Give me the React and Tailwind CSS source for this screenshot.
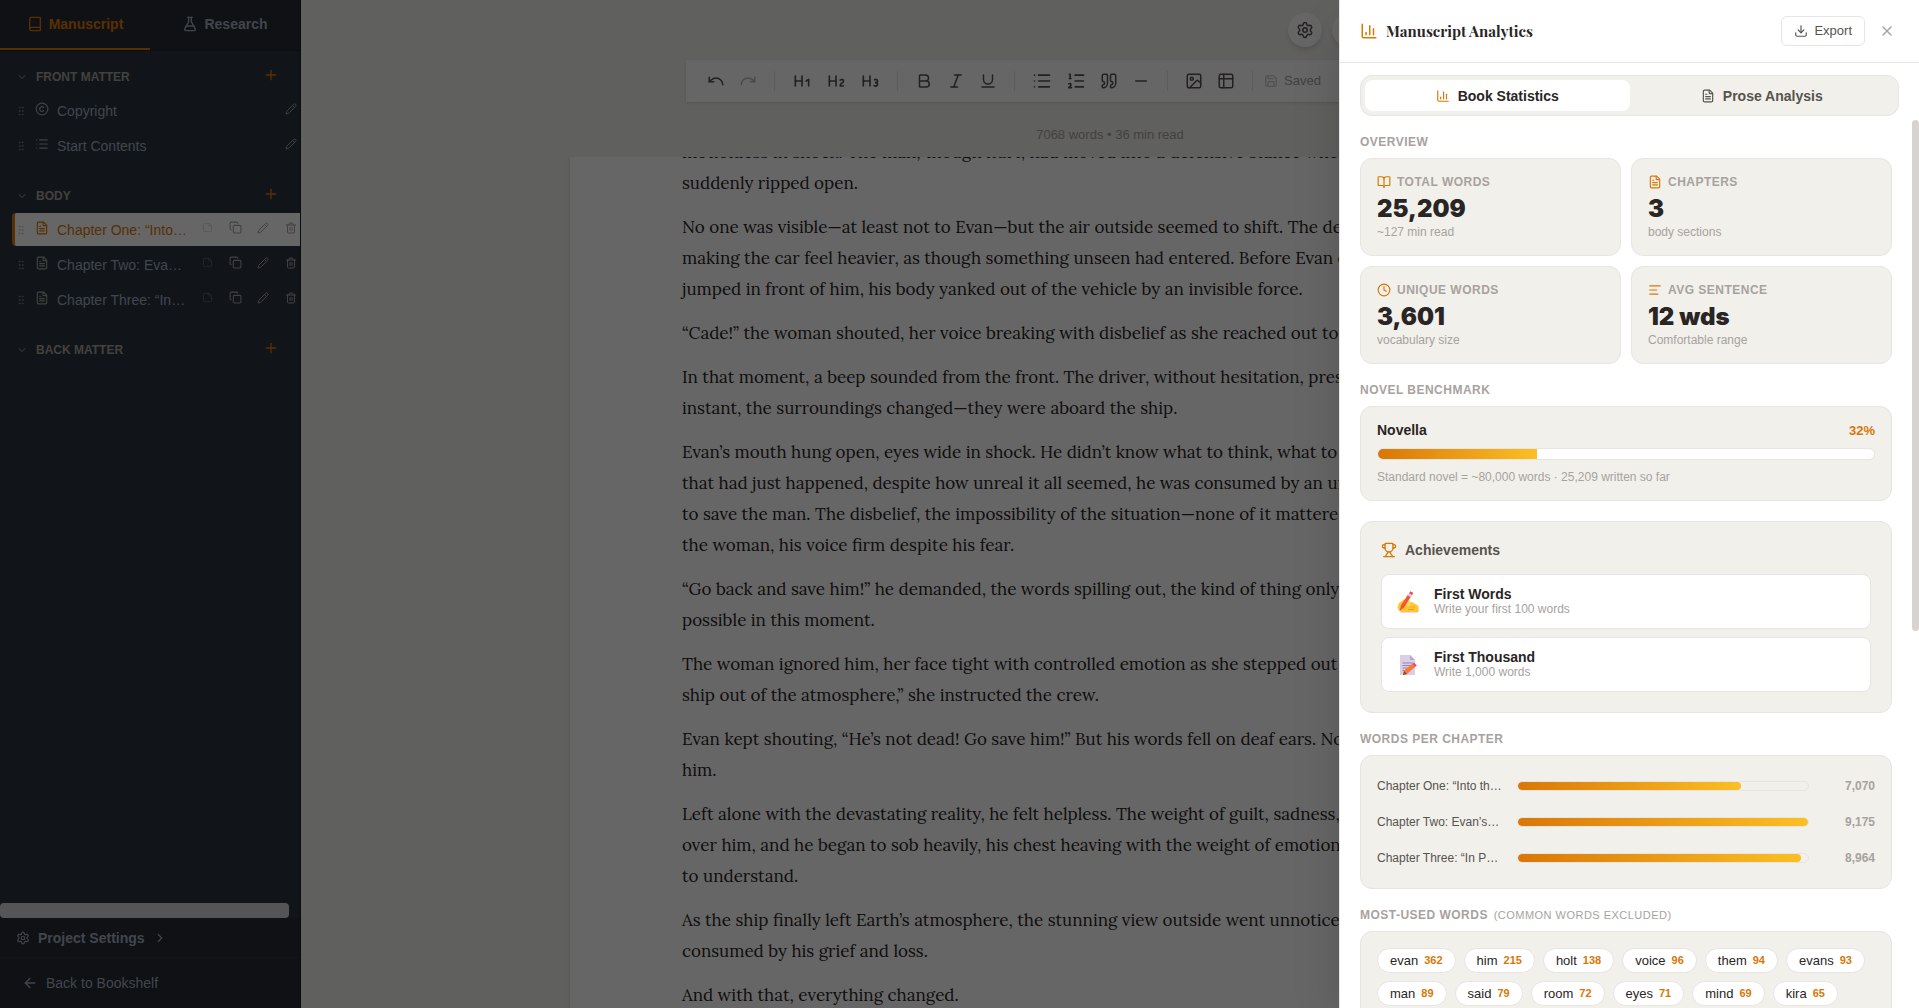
import { useState } from 'react';
import {
  AlignLeft, ArrowLeft, Bold, Book, BookOpen, ChartColumn, ChevronDown, ChevronRight, Clock,
  Copy, Copyright, Download, FileText, FlaskConical, GripVertical, Heading1, Heading2, Heading3,
  Image, Italic, List, ListOrdered, Minus, Moon, Pencil, Plus, Quote, Redo, Save, Settings,
  StickyNote, Trash2, Trophy, Underline, Undo, X,
} from 'lucide-react';

function TableIcon({ size }) {
  return (
    <svg
      width={size}
      height={size}
      viewBox="0 0 24 24"
      fill="none"
      stroke="currentColor"
      strokeWidth="2"
      strokeLinecap="round"
      strokeLinejoin="round"
      aria-hidden="true"
    >
      <rect x="3" y="3" width="18" height="18" rx="2" />
      <path d="M3 9h18M9 3v18" />
    </svg>
  );
}

const sections = [
  {
    title: 'Front Matter',
    items: [
      { name: 'Copyright', icon: Copyright },
      { name: 'Start Contents', icon: List },
    ],
  },
  {
    title: 'Body',
    items: [
      { name: 'Chapter One: “Into…', icon: FileText, chapter: true, active: true },
      { name: 'Chapter Two: Eva…', icon: FileText, chapter: true },
      { name: 'Chapter Three: “In…', icon: FileText, chapter: true },
    ],
  },
  { title: 'Back Matter', items: [] },
];

const toolGroups = [
  [
    { label: 'Undo', icon: Undo, size: 18 },
    { label: 'Redo', icon: Redo, size: 18, disabled: true },
  ],
  [
    { label: 'Heading 1', icon: Heading1, size: 20 },
    { label: 'Heading 2', icon: Heading2, size: 20 },
    { label: 'Heading 3', icon: Heading3, size: 20 },
  ],
  [
    { label: 'Bold', icon: Bold, size: 18 },
    { label: 'Italic', icon: Italic, size: 18 },
    { label: 'Underline', icon: Underline, size: 18 },
  ],
  [
    { label: 'Bullet list', icon: List, size: 20 },
    { label: 'Numbered list', icon: ListOrdered, size: 20 },
    { label: 'Quote', icon: Quote, size: 18 },
    { label: 'Divider', icon: Minus, size: 18 },
  ],
  [
    { label: 'Image', icon: Image, size: 18 },
    { label: 'Table', icon: TableIcon, size: 18 },
  ],
];

const paragraphs = [
  ['motionless in shock. The man, though hurt, had moved into a defensive stance when', 'suddenly ripped open.'],
  [
    'No one was visible—at least not to Evan—but the air outside seemed to shift. The de',
    'making the car feel heavier, as though something unseen had entered. Before Evan c',
    'jumped in front of him, his body yanked out of the vehicle by an invisible force.',
  ],
  ['“Cade!” the woman shouted, her voice breaking with disbelief as she reached out to'],
  [
    'In that moment, a beep sounded from the front. The driver, without hesitation, pres',
    'instant, the surroundings changed—they were aboard the ship.',
  ],
  [
    'Evan’s mouth hung open, eyes wide in shock. He didn’t know what to think, what to',
    'that had just happened, despite how unreal it all seemed, he was consumed by an ur',
    'to save the man. The disbelief, the impossibility of the situation—none of it mattered',
    'the woman, his voice firm despite his fear.',
  ],
  [
    '“Go back and save him!” he demanded, the words spilling out, the kind of thing only',
    'possible in this moment.',
  ],
  [
    'The woman ignored him, her face tight with controlled emotion as she stepped out',
    'ship out of the atmosphere,” she instructed the crew.',
  ],
  ['Evan kept shouting, “He’s not dead! Go save him!” But his words fell on deaf ears. No', 'him.'],
  [
    'Left alone with the devastating reality, he felt helpless. The weight of guilt, sadness,',
    'over him, and he began to sob heavily, his chest heaving with the weight of emotion',
    'to understand.',
  ],
  [
    'As the ship finally left Earth’s atmosphere, the stunning view outside went unnotice',
    'consumed by his grief and loss.',
  ],
  ['And with that, everything changed.'],
];

const overview = [
  { label: 'Total Words', value: '25,209', note: '~127 min read', icon: BookOpen },
  { label: 'Chapters', value: '3', note: 'body sections', icon: FileText },
  { label: 'Unique Words', value: '3,601', note: 'vocabulary size', icon: Clock },
  { label: 'Avg Sentence', value: '12 wds', note: 'Comfortable range', icon: AlignLeft },
];

const chapters = [
  { name: 'Chapter One: “Into th…', words: 7070 },
  { name: 'Chapter Two: Evan’s…', words: 9175 },
  { name: 'Chapter Three: “In P…', words: 8964 },
];

const topWords = [
  ['evan', 362], ['him', 215], ['holt', 138], ['voice', 96], ['them', 94], ['evans', 93],
  ['man', 89], ['said', 79], ['room', 72], ['eyes', 71], ['mind', 69], ['kira', 65],
];

function WritingHand() {
  return (
    <svg width="24" height="24" viewBox="0 0 24 24" aria-hidden="true">
      <path d="M4 22.500 6 18l9 .5 6 .5 1 3.500z" fill="#f7a8c4" />
      <path d="M1.500 17 3 13l5-3.500 2.500-.5 1.500 3 4 0 6.500 4 .3 5.500-5 .5H6.500L2.500 20z" fill="#ffc62e" />
      <path d="m9 13.500 4-3 2.500 2-3 3.500 6 .5-4 2.500z" fill="#ffdc5e" />
      <path d="M13 17h6M12 19.500h6" stroke="#f09a1c" strokeWidth="1" />
      <path d="m3.500 21 1.500-5.500L12 4.500l3.200 1.700L8 17.500z" fill="#f4552f" />
      <path d="m13 3.500 1.300-2.300 2.900 1.500-1.200 2.500z" fill="#f4446b" />
      <path d="m11.800 5.500 3.200 1.700 1-2-3-1.700z" fill="#d9c8e6" />
    </svg>
  );
}

function Memo() {
  return (
    <svg width="24" height="24" viewBox="0 0 24 24" aria-hidden="true">
      <path d="M4 2h10l5 5v15H4z" fill="#d9d0e6" />
      <path d="M14 2v5h5z" fill="#b6a8cc" />
      <path d="M6.500 10h10M6.500 12.500h10M6.500 15h7M6.500 17.500h4" stroke="#9485ad" strokeWidth="1" />
      <path d="m7 22 1-4.500 8-6.500 2.800 3.200L11 21z" fill="#f97b33" />
      <path d="m7 22 1-4 3 3z" fill="#8c4b3a" />
      <path d="m16 11 2-1.500 2.800 3-2 1.700z" fill="#f4446b" />
    </svg>
  );
}

function SidebarItem({ item }) {
  const Icon = item.icon;
  return (
    <li
      className={
        item.active
          ? 'flex h-[33px] items-center rounded-l border-l-3 border-[#d97706] bg-white text-[#d97706]'
          : 'flex h-[33px] items-center rounded-l border-l-3 border-transparent text-[#a0aec0]'
      }
    >
      <GripVertical size={12} className="shrink-0 text-[#a8a29e] opacity-60" />
      <a href="#section" className="flex min-w-0 flex-1 items-center gap-2 pl-2">
        <Icon size={14} className={item.active ? 'mb-1 shrink-0' : 'mb-1 shrink-0 text-[#a8a29e]'} />
        <span className="truncate text-sm">{item.name}</span>
      </a>
      <div className="-mr-[5px] mb-1 flex shrink-0 items-center text-[#a8a29e]">
        {item.chapter && (
          <>
            <button type="button" aria-label="Notes" className="flex w-7 justify-center opacity-40">
              <StickyNote size={11} />
            </button>
            <button type="button" aria-label="Duplicate" className="flex w-7 justify-center">
              <Copy size={13} />
            </button>
          </>
        )}
        <button type="button" aria-label="Rename" className="flex w-7 justify-center">
          <Pencil size={12} />
        </button>
        {item.chapter && (
          <button type="button" aria-label="Delete" className="flex w-7 justify-center">
            <Trash2 size={12} />
          </button>
        )}
      </div>
    </li>
  );
}

function Sidebar() {
  return (
    <aside className="flex w-[301px] shrink-0 flex-col border-r border-[#1a202c] bg-[#2b3440]">
      <div className="flex h-[51px] shrink-0 border-b border-[#1f242d] bg-[#282b32]">
        <button
          type="button"
          className="flex flex-1 items-center justify-center gap-1.5 border-b-2 border-[#d97706] text-sm font-bold text-[#d97706]"
        >
          <Book size={16} />
          Manuscript
        </button>
        <button
          type="button"
          className="flex flex-1 items-center justify-center gap-1.5 border-b-2 border-transparent text-sm font-bold text-[#a0aec0]"
        >
          <FlaskConical size={16} />
          Research
        </button>
      </div>

      <nav className="flex min-h-0 flex-1 flex-col gap-5 overflow-hidden pt-3 pl-3">
        {sections.map((section) => (
          <section key={section.title}>
            <div className="mb-[3px] flex h-7 items-center justify-between pr-[21px] pl-1">
              <h2 className="flex items-center gap-2 text-xs font-bold text-[#a8a29e] uppercase">
                <ChevronDown size={12} />
                {section.title}
              </h2>
              <button type="button" aria-label={`Add to ${section.title}`} className="mb-1 text-[#d97706]">
                <Plus size={16} />
              </button>
            </div>
            <ul className="flex flex-col gap-0.5">
              {section.items.map((item) => (
                <SidebarItem key={item.name} item={item} />
              ))}
            </ul>
          </section>
        ))}
      </nav>

      {/* horizontal scroll thumb of the section tree */}
      <div className="mr-[11px] h-[15px] shrink-0 rounded bg-[#d6d3d1]" />

      <div className="shrink-0 bg-[#282b32] text-[#a0aec0]">
        <button
          type="button"
          className="flex h-10 w-full items-center gap-2 border-b border-[#2b3440] pl-4 text-sm font-bold"
        >
          <Settings size={14} />
          Project Settings
          <ChevronRight size={14} />
        </button>
        <a href="#bookshelf" className="flex h-[50px] items-center gap-2 pl-[22px] text-sm">
          <ArrowLeft size={16} />
          Back to Bookshelf
        </a>
      </div>
    </aside>
  );
}

function Toolbar() {
  return (
    <div className="flex h-[42px] items-center bg-white px-[15px] text-[#57534e] shadow-sm">
      {toolGroups.map((group, i) => (
        <div key={i} className="flex items-center">
          <div className="flex items-center gap-0.5">
            {group.map(({ label, icon: Icon, size, disabled }) => (
              <button
                key={label}
                type="button"
                aria-label={label}
                disabled={disabled}
                className="p-1.5 disabled:opacity-40"
              >
                <Icon size={size} />
              </button>
            ))}
          </div>
          <span className="mx-[11px] h-5 w-px bg-[#e7e5e4]" />
        </div>
      ))}
      <span className="flex items-center gap-1.5 text-[13px] text-[#a8a29e]">
        <Save size={14} className="opacity-60" />
        Saved
      </span>
    </div>
  );
}

function Editor() {
  return (
    <main className="flex min-w-0 flex-1 flex-col items-center bg-[#f1f0eb]">
      <div className="w-full max-w-[848px] shrink-0">
        <div className="flex h-[60px] items-center justify-end gap-2.5 pr-9">
          {[Settings, ChartColumn, BookOpen, Download, Moon].map((Icon, i) => (
            <button
              key={i}
              type="button"
              aria-label="Editor option"
              className="flex size-[34px] items-center justify-center rounded-full bg-white text-[#57534e] shadow-md"
            >
              <Icon size={18} />
            </button>
          ))}
        </div>
        <Toolbar />
        <p className="pt-[25px] pb-[15px] text-center text-[13px] leading-[15px] text-[#a8a29e]">
          7068 words • 36 min read
        </p>
      </div>
      <div className="min-h-0 w-full flex-1 overflow-hidden">
        <article className="mx-auto -mt-5 flex w-full max-w-[1080px] flex-col gap-[13px] bg-white px-28 font-[Lora,'Liberation_Serif',serif] text-[17px] leading-[31px] text-[#292524] shadow-md">
          {paragraphs.map((lines) => (
            <p key={lines[0]}>
              {lines.map((line) => (
                <span key={line} className="block whitespace-nowrap">{line}</span>
              ))}
            </p>
          ))}
        </article>
      </div>
    </main>
  );
}

function SectionTitle({ children }) {
  return (
    <h3 className="mt-[18px] mb-2 text-xs leading-4 font-bold tracking-[0.04em] text-[#a8a29e] uppercase">
      {children}
    </h3>
  );
}

function StatCard({ stat }) {
  const Icon = stat.icon;
  return (
    <div className="rounded-xl border border-[#e7e5e4] bg-[#f1f0eb] p-4">
      <div className="flex items-center gap-1.5 text-xs leading-[14px] font-bold tracking-[0.04em] text-[#a8a29e] uppercase">
        <Icon size={14} className="text-[#d97706]" />
        {stat.label}
      </div>
      <div className="mt-1.5 mb-0.5 font-[Inter,sans-serif] text-2xl leading-7 font-black text-[#292524]">{stat.value}</div>
      <div className="text-xs leading-[14px] text-[#a8a29e]">{stat.note}</div>
    </div>
  );
}

function Achievement({ art, title, note }) {
  return (
    <li className="flex items-center gap-3.5 rounded-lg border border-[#e7e5e4] bg-white px-3.5 py-3">
      {art}
      <div>
        <div className="text-sm leading-[15px] font-bold text-[#292524]">{title}</div>
        <div className="text-xs leading-[14px] text-[#a8a29e]">{note}</div>
      </div>
    </li>
  );
}

function AnalyticsDrawer() {
  const [tab, setTab] = useState('stats');
  const longest = Math.max(...chapters.map((c) => c.words));
  const tabClass = 'flex h-[31px] flex-1 items-center justify-center gap-2 rounded-lg text-sm font-bold';

  return (
    <div
      role="dialog"
      aria-label="Manuscript Analytics"
      className="absolute inset-y-0 right-0 flex w-[580px] flex-col border-l border-[#e7e5e4] bg-white shadow-2xl"
    >
      <header className="flex h-[63px] shrink-0 items-center border-b border-[#e7e5e4] px-5">
        <ChartColumn size={18} className="text-[#d97706]" />
        <h2 className="ml-2 flex-1 font-['Playfair_Display','Liberation_Serif',serif] text-[15px] font-bold text-[#292524]">
          Manuscript Analytics
        </h2>
        <button
          type="button"
          className="flex h-[30px] items-center gap-1.5 rounded-md border border-[#e7e5e4] px-3 text-[13px] text-[#57534e]"
        >
          <Download size={14} />
          Export
        </button>
        <button type="button" aria-label="Close" className="ml-2.5 p-1 text-[#a8a29e]">
          <X size={16} />
        </button>
      </header>

      <div className="shrink-0 px-5 pt-3">
        <div className="flex rounded-xl border border-[#e7e5e4] bg-[#f1f0eb] p-1">
          <button
            type="button"
            onClick={() => setTab('stats')}
            className={tab === 'stats' ? `${tabClass} bg-white text-[#292524]` : `${tabClass} text-[#57534e]`}
          >
            <ChartColumn size={14} className="text-[#d97706]" />
            Book Statistics
          </button>
          <button
            type="button"
            onClick={() => setTab('prose')}
            className={tab === 'prose' ? `${tabClass} bg-white text-[#292524]` : `${tabClass} text-[#57534e]`}
          >
            <FileText size={14} />
            Prose Analysis
          </button>
        </div>
      </div>

      <div className="mt-1 flex min-h-0 flex-1 overflow-hidden">
        <div className="min-w-0 flex-1 px-5">
          <div className="-mt-1">
            <SectionTitle>Overview</SectionTitle>
          </div>
          <div className="grid grid-cols-2 gap-2.5">
            {overview.map((stat) => (
              <StatCard key={stat.label} stat={stat} />
            ))}
          </div>

          <SectionTitle>Novel Benchmark</SectionTitle>
          <div className="rounded-xl border border-[#e7e5e4] bg-[#f1f0eb] p-4">
            <div className="flex items-center justify-between font-bold">
              <span className="text-sm leading-[15px] text-[#292524]">Novella</span>
              <span className="text-[13px] leading-[15px] text-[#d97706]">32%</span>
            </div>
            <div className="my-2.5 h-3 overflow-hidden rounded-md border border-[#e7e5e4] bg-white">
              <div className="h-full bg-linear-to-r from-[#d97706] to-[#fbbf24]" style={{ width: '32%' }} />
            </div>
            <p className="text-xs leading-[14px] text-[#a8a29e]">
              Standard novel = ~80,000 words · 25,209 written so far
            </p>
          </div>

          <div className="mt-5 rounded-xl border border-[#e7e5e4] bg-[#f1f0eb] p-5">
            <h3 className="mb-4 flex items-center gap-2 text-sm leading-4 font-bold text-[#57534e]">
              <Trophy size={16} className="text-[#d97706]" />
              Achievements
            </h3>
            <ul className="flex flex-col gap-2">
              <Achievement art={<WritingHand />} title="First Words" note="Write your first 100 words" />
              <Achievement art={<Memo />} title="First Thousand" note="Write 1,000 words" />
            </ul>
          </div>

          <SectionTitle>Words Per Chapter</SectionTitle>
          <ul className="rounded-xl border border-[#e7e5e4] bg-[#f1f0eb] px-4 py-3">
            {chapters.map((c) => (
              <li key={c.name} className="flex h-9 items-center gap-2.5 text-xs">
                <span className="w-[130px] truncate text-[#57534e]">{c.name}</span>
                <div className="h-2.5 flex-1 overflow-hidden rounded-full border border-[#e7e5e4]">
                  <div
                    className="h-full rounded-full bg-linear-to-r from-[#d97706] to-[#fbbf24]"
                    style={{ width: `${(c.words / longest) * 100}%` }}
                  />
                </div>
                <span className="w-14 text-right font-bold text-[#a8a29e]">{c.words.toLocaleString('en-US')}</span>
              </li>
            ))}
          </ul>

          <SectionTitle>
            Most-Used Words <span className="ml-0.5 text-[11px] font-normal">(common words excluded)</span>
          </SectionTitle>
          <ul className="flex flex-wrap gap-2 rounded-xl border border-[#e7e5e4] bg-[#f1f0eb] p-4">
            {topWords.map(([word, count]) => (
              <li
                key={word}
                className="flex h-[25px] items-center gap-1.5 rounded-full border border-[#e7e5e4] bg-white px-3 text-[13px] text-[#292524]"
              >
                {word}
                <span className="text-[11px] font-bold text-[#d97706]">{count}</span>
              </li>
            ))}
          </ul>
        </div>
        <div className="h-[511px] w-[7px] shrink-0 rounded bg-[#d6d3d1]" />
      </div>
    </div>
  );
}

export default function App() {
  return (
    <div className="relative flex h-screen overflow-hidden font-['Liberation_Sans',Arial,sans-serif]">
      <Sidebar />
      <Editor />
      <div className="absolute inset-0 bg-black/60" />
      <AnalyticsDrawer />
    </div>
  );
}
